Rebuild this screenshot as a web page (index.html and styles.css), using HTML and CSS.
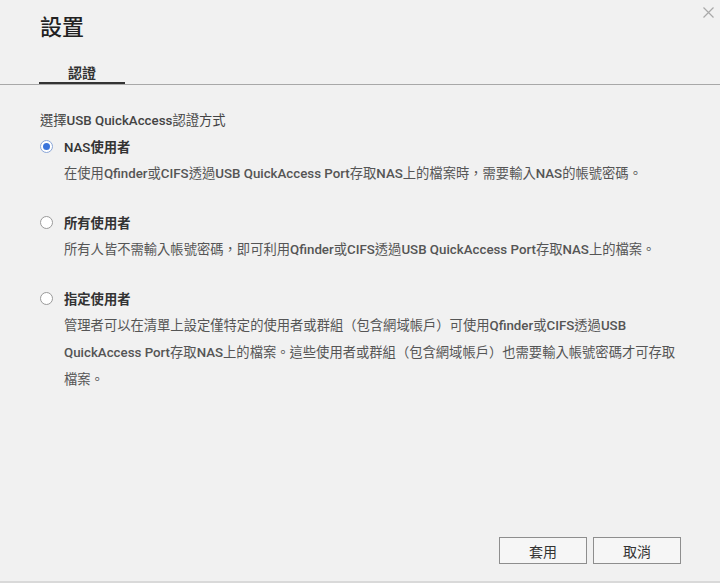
FILE: index.html
```html
<!DOCTYPE html>
<html lang="zh-Hant">
<head>
<meta charset="utf-8">
<title>設置</title>
<link rel="stylesheet" href="styles.css">
</head>
<body>
<div class="dialog">
  <button class="close" aria-label="close">
    <svg width="11" height="11" viewBox="0 0 11 11"><path d="M0.5 0.5L10.5 10.5M10.5 0.5L0.5 10.5" stroke="#a9a9a9" stroke-width="1.2" fill="none"/></svg>
  </button>
  <header class="head">
    <h1 class="title">設置</h1>
  </header>
  <nav class="tabs">
    <span class="tab">認證</span>
  </nav>
  <main class="content">
    <p class="intro">選擇<span class="lat">USB QuickAccess</span>認證方式</p>
    <div class="option">
      <label class="opt-label"><span class="radio checked"></span><span class="opt-name"><span class="lat">NAS</span>使用者</span></label>
      <p class="desc">在使用<span class="lat">Qfinder</span>或<span class="lat">CIFS</span>透過<span class="lat">USB QuickAccess Port</span>存取<span class="lat">NAS</span>上的檔案時，需要輸入<span class="lat">NAS</span>的帳號密碼。</p>
    </div>
    <div class="option">
      <label class="opt-label"><span class="radio"></span><span class="opt-name">所有使用者</span></label>
      <p class="desc">所有人皆不需輸入帳號密碼，即可利用<span class="lat">Qfinder</span>或<span class="lat">CIFS</span>透過<span class="lat">USB QuickAccess Port</span>存取<span class="lat">NAS</span>上的檔案。</p>
    </div>
    <div class="option">
      <label class="opt-label"><span class="radio"></span><span class="opt-name">指定使用者</span></label>
      <p class="desc">管理者可以在清單上設定僅特定的使用者或群組（包含網域帳戶）可使用<span class="lat">Qfinder</span>或<span class="lat">CIFS</span>透過<span class="lat">USB QuickAccess Port</span>存取<span class="lat">NAS</span>上的檔案。這些使用者或群組（包含網域帳戶）也需要輸入帳號密碼才可存取檔案。</p>
    </div>
  </main>
  <footer class="foot">
    <button class="btn">套用</button>
    <button class="btn">取消</button>
  </footer>
</div>
</body>
</html>
```

FILE: styles.css
```css
html, body {
  margin: 0;
  padding: 0;
  height: 100%;
}
body {
  background: #f1f1f1;
  font-family: Roboto, "Noto Sans CJK TC", "Noto Sans", sans-serif;
  color: #555;
}
.dialog {
  position: relative;
  height: 583px;
  box-sizing: border-box;
  border-bottom: 2px solid #d9d9d9;
  display: flex;
  flex-direction: column;
}
.close {
  position: absolute;
  top: 7px;
  right: 6px;
  width: 11px;
  height: 11px;
  padding: 0;
  border: 0;
  background: none;
  line-height: 0;
}
.head {
  padding: 17px 40px 0;
}
.title {
  margin: 0;
  font-size: 22px;
  line-height: 22px;
  font-weight: 500;
  color: #222;
}
.tabs {
  margin-top: 25px;
  padding-left: 39px;
  border-bottom: 1px solid #a8a8a8;
  display: flex;
}
.tab {
  width: 86px;
  text-align: center;
  font-size: 14px;
  line-height: 18px;
  font-weight: 700;
  color: #333;
  border-bottom: 2px solid #333;
}
.content {
  padding: 26px 39px 0 40px;
}
.intro {
  margin: 0;
  font-size: 13.3px;
  line-height: 20px;
  color: #444;
}
.lat {
  font-weight: 500;
}
.option {
  margin-top: 5px;
}
.option + .option {
  margin-top: 25px;
}
.opt-label {
  display: flex;
  align-items: center;
  height: 20px;
}
.radio {
  width: 11px;
  height: 11px;
  border: 1px solid #9a9a9a;
  border-radius: 50%;
  background: #fff;
  box-sizing: content-box;
  display: flex;
  align-items: center;
  justify-content: center;
  margin-right: 11px;
  flex: none;
}
.radio.checked {
  border-color: #8aa6d8;
}
.radio.checked::after {
  content: "";
  width: 7px;
  height: 7px;
  border-radius: 50%;
  background: #3a74db;
}
.opt-name {
  font-size: 13.3px;
  font-weight: 700;
  color: #333;
}
.desc {
  margin: 4px 0 0 24px;
  font-size: 13.3px;
  line-height: 27px;
  color: #555;
}
.foot {
  margin-top: auto;
  display: flex;
  justify-content: flex-end;
  gap: 6px;
  padding: 0 39px 17px 0;
}
.btn {
  width: 88px;
  height: 27px;
  margin: 0;
  padding: 0;
  border: 1px solid #8e8e8e;
  background: #f6f6f6;
  font-family: Roboto, "Noto Sans CJK TC", sans-serif;
  font-size: 14px;
  color: #333;
}
```
